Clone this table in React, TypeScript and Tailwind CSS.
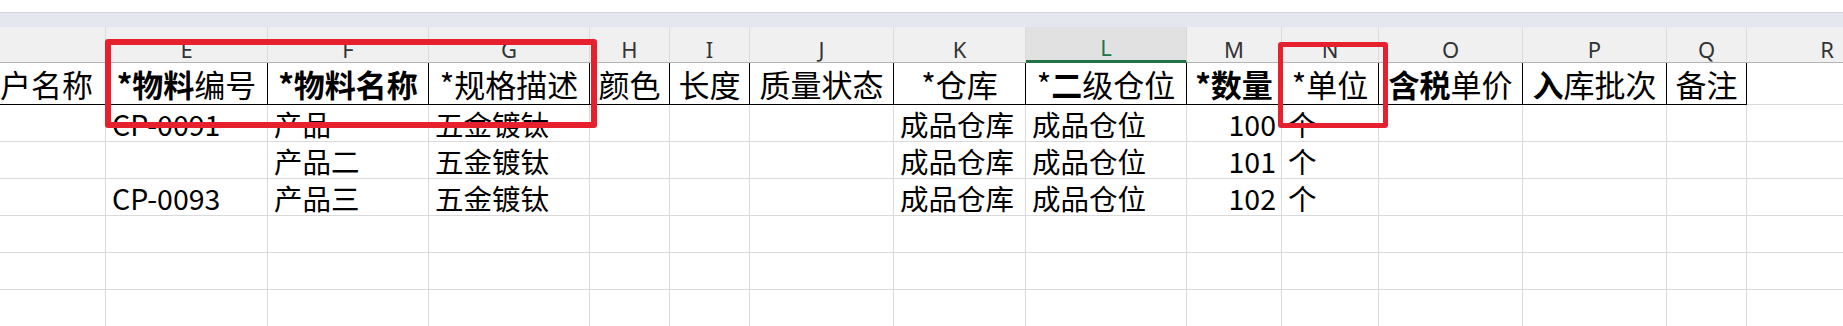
const cols = [
  { key: "D", w: 106, letter: "" },
  { key: "E", w: 162, letter: "E" },
  { key: "F", w: 161, letter: "F" },
  { key: "G", w: 161, letter: "G" },
  { key: "H", w: 80, letter: "H" },
  { key: "I", w: 80, letter: "I" },
  { key: "J", w: 144, letter: "J" },
  { key: "K", w: 132, letter: "K" },
  { key: "L", w: 161, letter: "L" },
  { key: "M", w: 95, letter: "M" },
  { key: "N", w: 97, letter: "N" },
  { key: "O", w: 144, letter: "O" },
  { key: "P", w: 144, letter: "P" },
  { key: "Q", w: 80, letter: "Q" },
  { key: "R", w: 161, letter: "R" },
];

type Part = { t: string; b?: boolean };

const headers: Part[][] = [
  [{ t: "户名称" }],
  [{ t: "*物料", b: true }, { t: "编号" }],
  [{ t: "*物料名称", b: true }],
  [{ t: "*规格描述" }],
  [{ t: "颜色" }],
  [{ t: "长度" }],
  [{ t: "质量状态" }],
  [{ t: "*仓库" }],
  [{ t: "*" }, { t: "二", b: true }, { t: "级仓位" }],
  [{ t: "*数量", b: true }],
  [{ t: "*单位" }],
  [{ t: "含税", b: true }, { t: "单价" }],
  [{ t: "入", b: true }, { t: "库批次" }],
  [{ t: "备注" }],
  [],
];

const rows: Record<string, string>[] = [
  { E: "CP-0091", F: "产品", G: "五金镀钛", K: "成品仓库", L: "成品仓位", M: "100", N: "个" },
  { F: "产品二", G: "五金镀钛", K: "成品仓库", L: "成品仓位", M: "101", N: "个" },
  { E: "CP-0093", F: "产品三", G: "五金镀钛", K: "成品仓库", L: "成品仓位", M: "102", N: "个" },
  {},
  {},
  {},
];

const gridCols =
  "grid-cols-[106px_162px_161px_161px_80px_80px_144px_132px_161px_95px_97px_144px_144px_80px_161px]";

export default function App() {
  return (
    <div className="relative h-[326px] w-[1843px] overflow-hidden bg-white font-['Noto_Sans_CJK_SC',sans-serif] text-black">
      <div className="h-[13px] border-b border-[#d6d6d6] bg-white" />
      <div className="h-[14px] bg-[#e4e7ee]" />

      <div className={`grid ${gridCols} grid-rows-[36px_42px_repeat(6,37px)]`}>
        {/* column letters */}
        {cols.map((c) =>
          c.key === "L" ? (
            <div
              key={c.key}
              className="flex items-center justify-center border-r border-b-[3px] border-r-[#d8d8d8] border-b-[#217346] bg-[#e1e1e1] pt-[7px] font-['Noto_Sans',sans-serif] text-[22px] leading-none text-[#217346]"
            >
              {c.letter}
            </div>
          ) : (
            <div
              key={c.key}
              className="flex items-center justify-center border-r border-b border-r-[#dcdcdc] border-b-[#b4b4b4] bg-[#f0f0f0] pt-[8px] font-['Noto_Sans',sans-serif] text-[22px] leading-none text-[#333333]"
            >
              {c.letter}
            </div>
          )
        )}

        {/* header row */}
        {cols.map((c, i) =>
          c.key === "R" ? (
            <div key={c.key} className="border-r border-b border-[#dadada]" />
          ) : c.key === "D" ? (
            <div
              key={c.key}
              className="flex items-center justify-end whitespace-nowrap border-r border-b border-black pr-[12px] text-[31px] leading-none"
            >
              {headers[i].map((p, j) => (
                <span key={j} className={p.b ? "font-bold" : ""}>
                  {p.t}
                </span>
              ))}
            </div>
          ) : (
            <div
              key={c.key}
              className="flex items-center justify-center whitespace-nowrap border-r border-b border-black text-[31px] leading-none"
            >
              {headers[i].map((p, j) => (
                <span key={j} className={p.b ? "font-bold" : ""}>
                  {p.t}
                </span>
              ))}
            </div>
          )
        )}

        {/* data rows */}
        {rows.map((r, ri) =>
          cols.map((c) => (
            <div
              key={`${ri}-${c.key}`}
              className={
                c.key === "M"
                  ? "flex items-center justify-end whitespace-nowrap border-r border-b border-[#dadada] pr-[5px] pt-[2px] text-[28.5px] leading-none"
                  : "flex items-center whitespace-nowrap border-r border-b border-[#dadada] pl-[6px] pt-[2px] text-[28.5px] leading-none"
              }
            >
              {r[c.key] ?? ""}
            </div>
          ))
        )}
      </div>

      {/* red annotation boxes */}
      <div className="pointer-events-none absolute left-[105px] top-[39px] h-[89px] w-[492px] rounded-[3px] border-[6px] border-[#e6212d]" />
      <div className="pointer-events-none absolute left-[1278px] top-[42px] h-[86px] w-[110px] rounded-[3px] border-[5px] border-[#e6212d]" />
    </div>
  );
}
